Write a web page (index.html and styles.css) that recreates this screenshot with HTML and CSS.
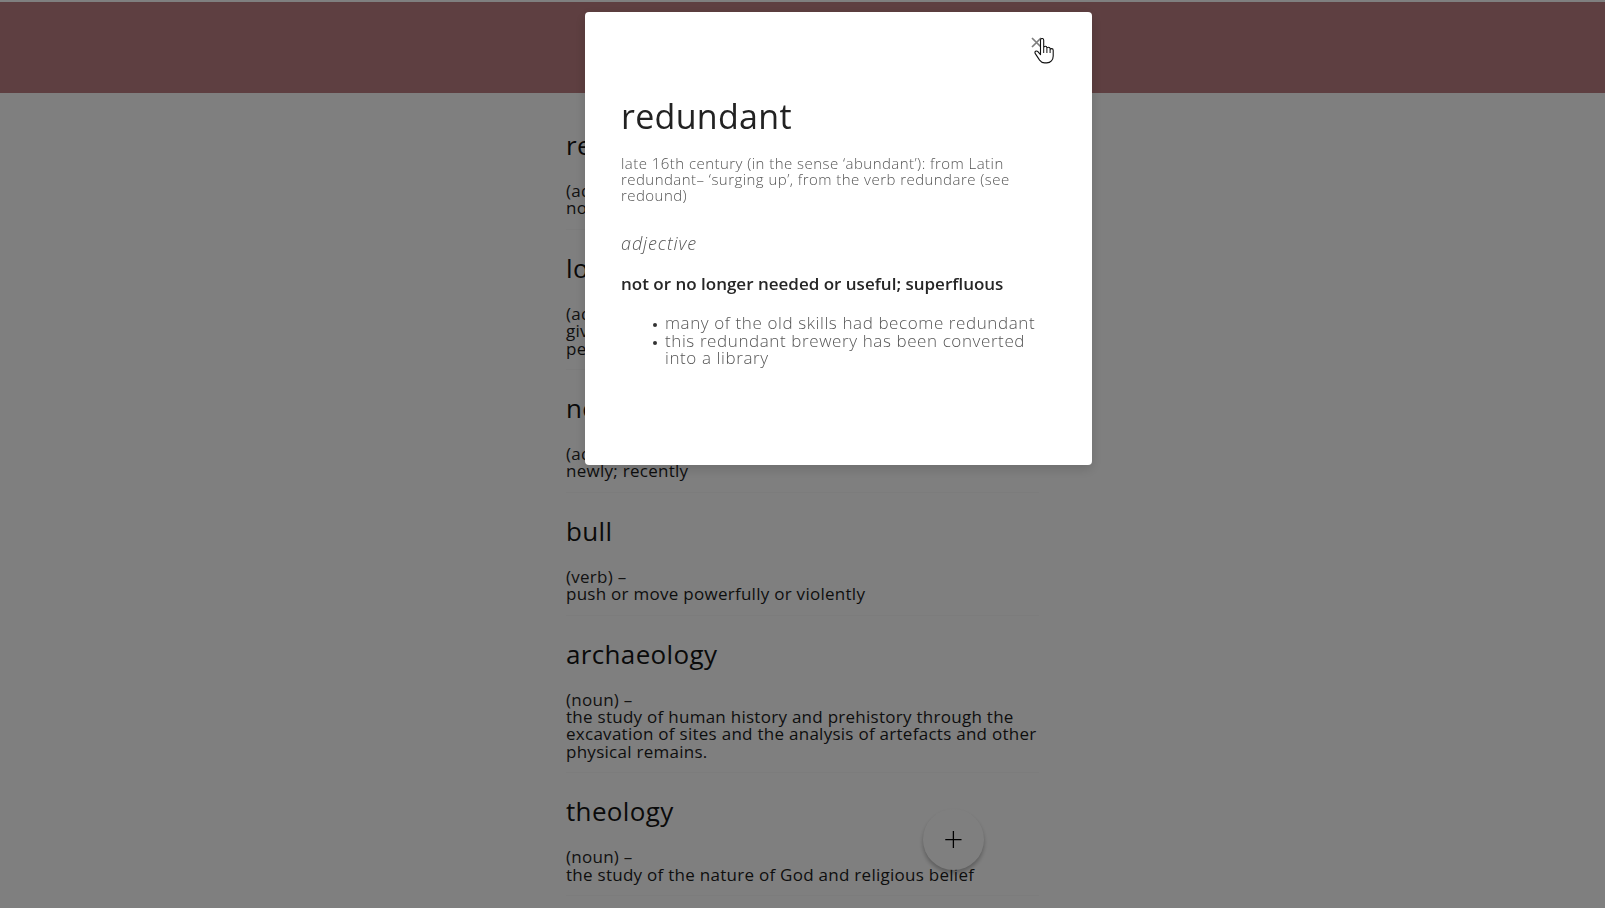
FILE: index.html
```html
<!DOCTYPE html>
<html lang="en">
<head>
<meta charset="utf-8">
<title>Dictionary</title>
<link rel="stylesheet" href="styles.css">
</head>
<body>
<header class="topbar"></header>
<main class="entries">
  <article class="entry">
    <h2 class="word">redundant</h2>
    <p class="pos">(adjective) –</p>
    <p class="def">not or no longer needed or useful; superfluous</p>
  </article>
  <article class="entry">
    <h2 class="word">loyal</h2>
    <p class="pos">(adjective) –</p>
    <p class="def">giving or showing constant support or allegiance to a person or institution</p>
  </article>
  <article class="entry">
    <h2 class="word">new</h2>
    <p class="pos">(adverb) –</p>
    <p class="def">newly; recently</p>
  </article>
  <article class="entry">
    <h2 class="word">bull</h2>
    <p class="pos">(verb) –</p>
    <p class="def">push or move powerfully or violently</p>
  </article>
  <article class="entry">
    <h2 class="word">archaeology</h2>
    <p class="pos">(noun) –</p>
    <p class="def">the study of human history and prehistory through the excavation of sites and the analysis of artefacts and other physical remains.</p>
  </article>
  <article class="entry">
    <h2 class="word">theology</h2>
    <p class="pos">(noun) –</p>
    <p class="def">the study of the nature of God and religious belief</p>
  </article>
</main>
<button class="fab" aria-label="Add word">+</button>
<div class="overlay"></div>
<div class="modal">
  <div class="modal-head">
    <button class="close" aria-label="Close">
      <svg width="11" height="11" viewBox="0 0 11 11"><path d="M1 1 L10 10 M10 1 L1 10" stroke="#7d7d7d" stroke-width="1.7" fill="none"/></svg>
    </button>
  </div>
  <h1 class="m-title">redundant</h1>
  <p class="m-origin">late 16th century (in the sense ‘abundant’): from Latin redundant– ‘surging up’, from the verb redundare (see redound)</p>
  <p class="m-pos">adjective</p>
  <p class="m-def">not or no longer needed or useful; superfluous</p>
  <ul class="m-examples">
    <li>many of the old skills had become redundant</li>
    <li>this redundant brewery has been converted into a library</li>
  </ul>
</div>
<svg class="cursor" width="22" height="26" viewBox="0 0 22 26">
  <path d="M6.5 2.2c0-1 .7-1.7 1.6-1.7s1.6.7 1.6 1.7v7.3c.2-.8.9-1.3 1.6-1.3.9 0 1.6.7 1.6 1.6v.6c.2-.7.9-1.2 1.6-1.2.9 0 1.6.7 1.6 1.6v.8c.2-.6.8-1 1.5-1 .9 0 1.6.7 1.6 1.6v5.8c0 3.9-2.6 6.9-6.4 6.9h-2.2c-2.3 0-3.7-1-5-2.8L1.3 15.6c-.6-.8-.4-1.8.3-2.3.8-.5 1.7-.3 2.3.4l2.6 3V2.2z" fill="#fff" stroke="#111" stroke-width="1.1" stroke-linejoin="round"/>
  <path d="M9.7 10v5 M12.9 11v4 M16.1 12v3" stroke="#111" stroke-width="1" fill="none"/>
</svg>
</body>
</html>
```
FILE: styles.css
```css
* { box-sizing: border-box; }
html, body { margin: 0; padding: 0; }
body {
  background: #ffffff;
  font-family: "Open Sans", "Noto Sans", sans-serif;
  color: #1c1c1c;
  padding-top: 2px;
  height: 908px;
  overflow: hidden;
}
.topbar {
  height: 91px;
  background: #bc7e82;
}
.entries {
  width: 473px;
  margin: 0 auto;
  padding-top: 37px;
}
.entry {
  padding-bottom: 12px;
  margin-bottom: 23px;
  border-bottom: 1px solid rgba(0, 0, 0, 0.025);
}
.word {
  margin: 0;
  font-size: 26px;
  line-height: 30px;
  font-weight: 400;
  color: #141414;
  letter-spacing: 0.35px;
}
.pos, .def {
  margin: 0;
  font-size: 17px;
  line-height: 17.4px;
  font-weight: 400;
  letter-spacing: 0.27px;
}
.pos { margin-top: 22px; color: #262626; }
.def { color: #1c1c1c; }
.fab {
  position: fixed;
  left: 923px;
  top: 809px;
  width: 61px;
  height: 61px;
  border-radius: 50%;
  border: none;
  background: #ffffff;
  box-shadow: 0 3px 4px rgba(0, 0, 0, 0.28);
  font-family: "DejaVu Sans", sans-serif;
  font-size: 26px;
  font-weight: 300;
  line-height: 61px;
  padding: 0;
  color: #000;
}
.overlay {
  position: fixed;
  inset: 0;
  background: rgba(0, 0, 0, 0.5);
}
.modal {
  position: fixed;
  left: 585px;
  top: 12px;
  width: 507px;
  height: 453px;
  background: #ffffff;
  border-radius: 4px;
  box-shadow: 0 4px 12px rgba(0, 0, 0, 0.15);
  padding: 25px 36px;
}
.modal-head {
  display: flex;
  justify-content: flex-end;
  height: 10px;
  margin-right: 14px;
}
.close {
  border: none;
  background: none;
  padding: 0;
  width: 11px;
  height: 11px;
}
.close svg { display: block; }
.m-title {
  margin: 50px 0 0;
  font-size: 34px;
  line-height: 38px;
  font-weight: 400;
  color: #222;
  letter-spacing: 0.3px;
}
.m-origin {
  margin: 20px 0 0;
  font-size: 15px;
  line-height: 16px;
  font-weight: 300;
  color: #555;
  letter-spacing: 0.45px;
}
.m-pos {
  margin: 30px 0 0;
  font-size: 18px;
  line-height: 20px;
  font-style: italic;
  font-weight: 300;
  color: #555;
  letter-spacing: 0.9px;
}
.m-def {
  margin: 21px 0 0;
  font-size: 17px;
  line-height: 20px;
  font-weight: 600;
  color: #262626;
}
.m-examples {
  margin: 20px 0 0;
  padding-left: 44px;
  list-style: none;
  font-size: 17px;
  line-height: 17.5px;
  font-weight: 300;
  color: #555;
  letter-spacing: 0.6px;
}
.m-examples li {
  position: relative;
}
.m-examples li::before {
  content: "";
  position: absolute;
  left: -12px;
  top: 9px;
  width: 4px;
  height: 4px;
  border-radius: 50%;
  background: #333;
}
.cursor {
  position: fixed;
  left: 1034px;
  top: 38px;
}
```
